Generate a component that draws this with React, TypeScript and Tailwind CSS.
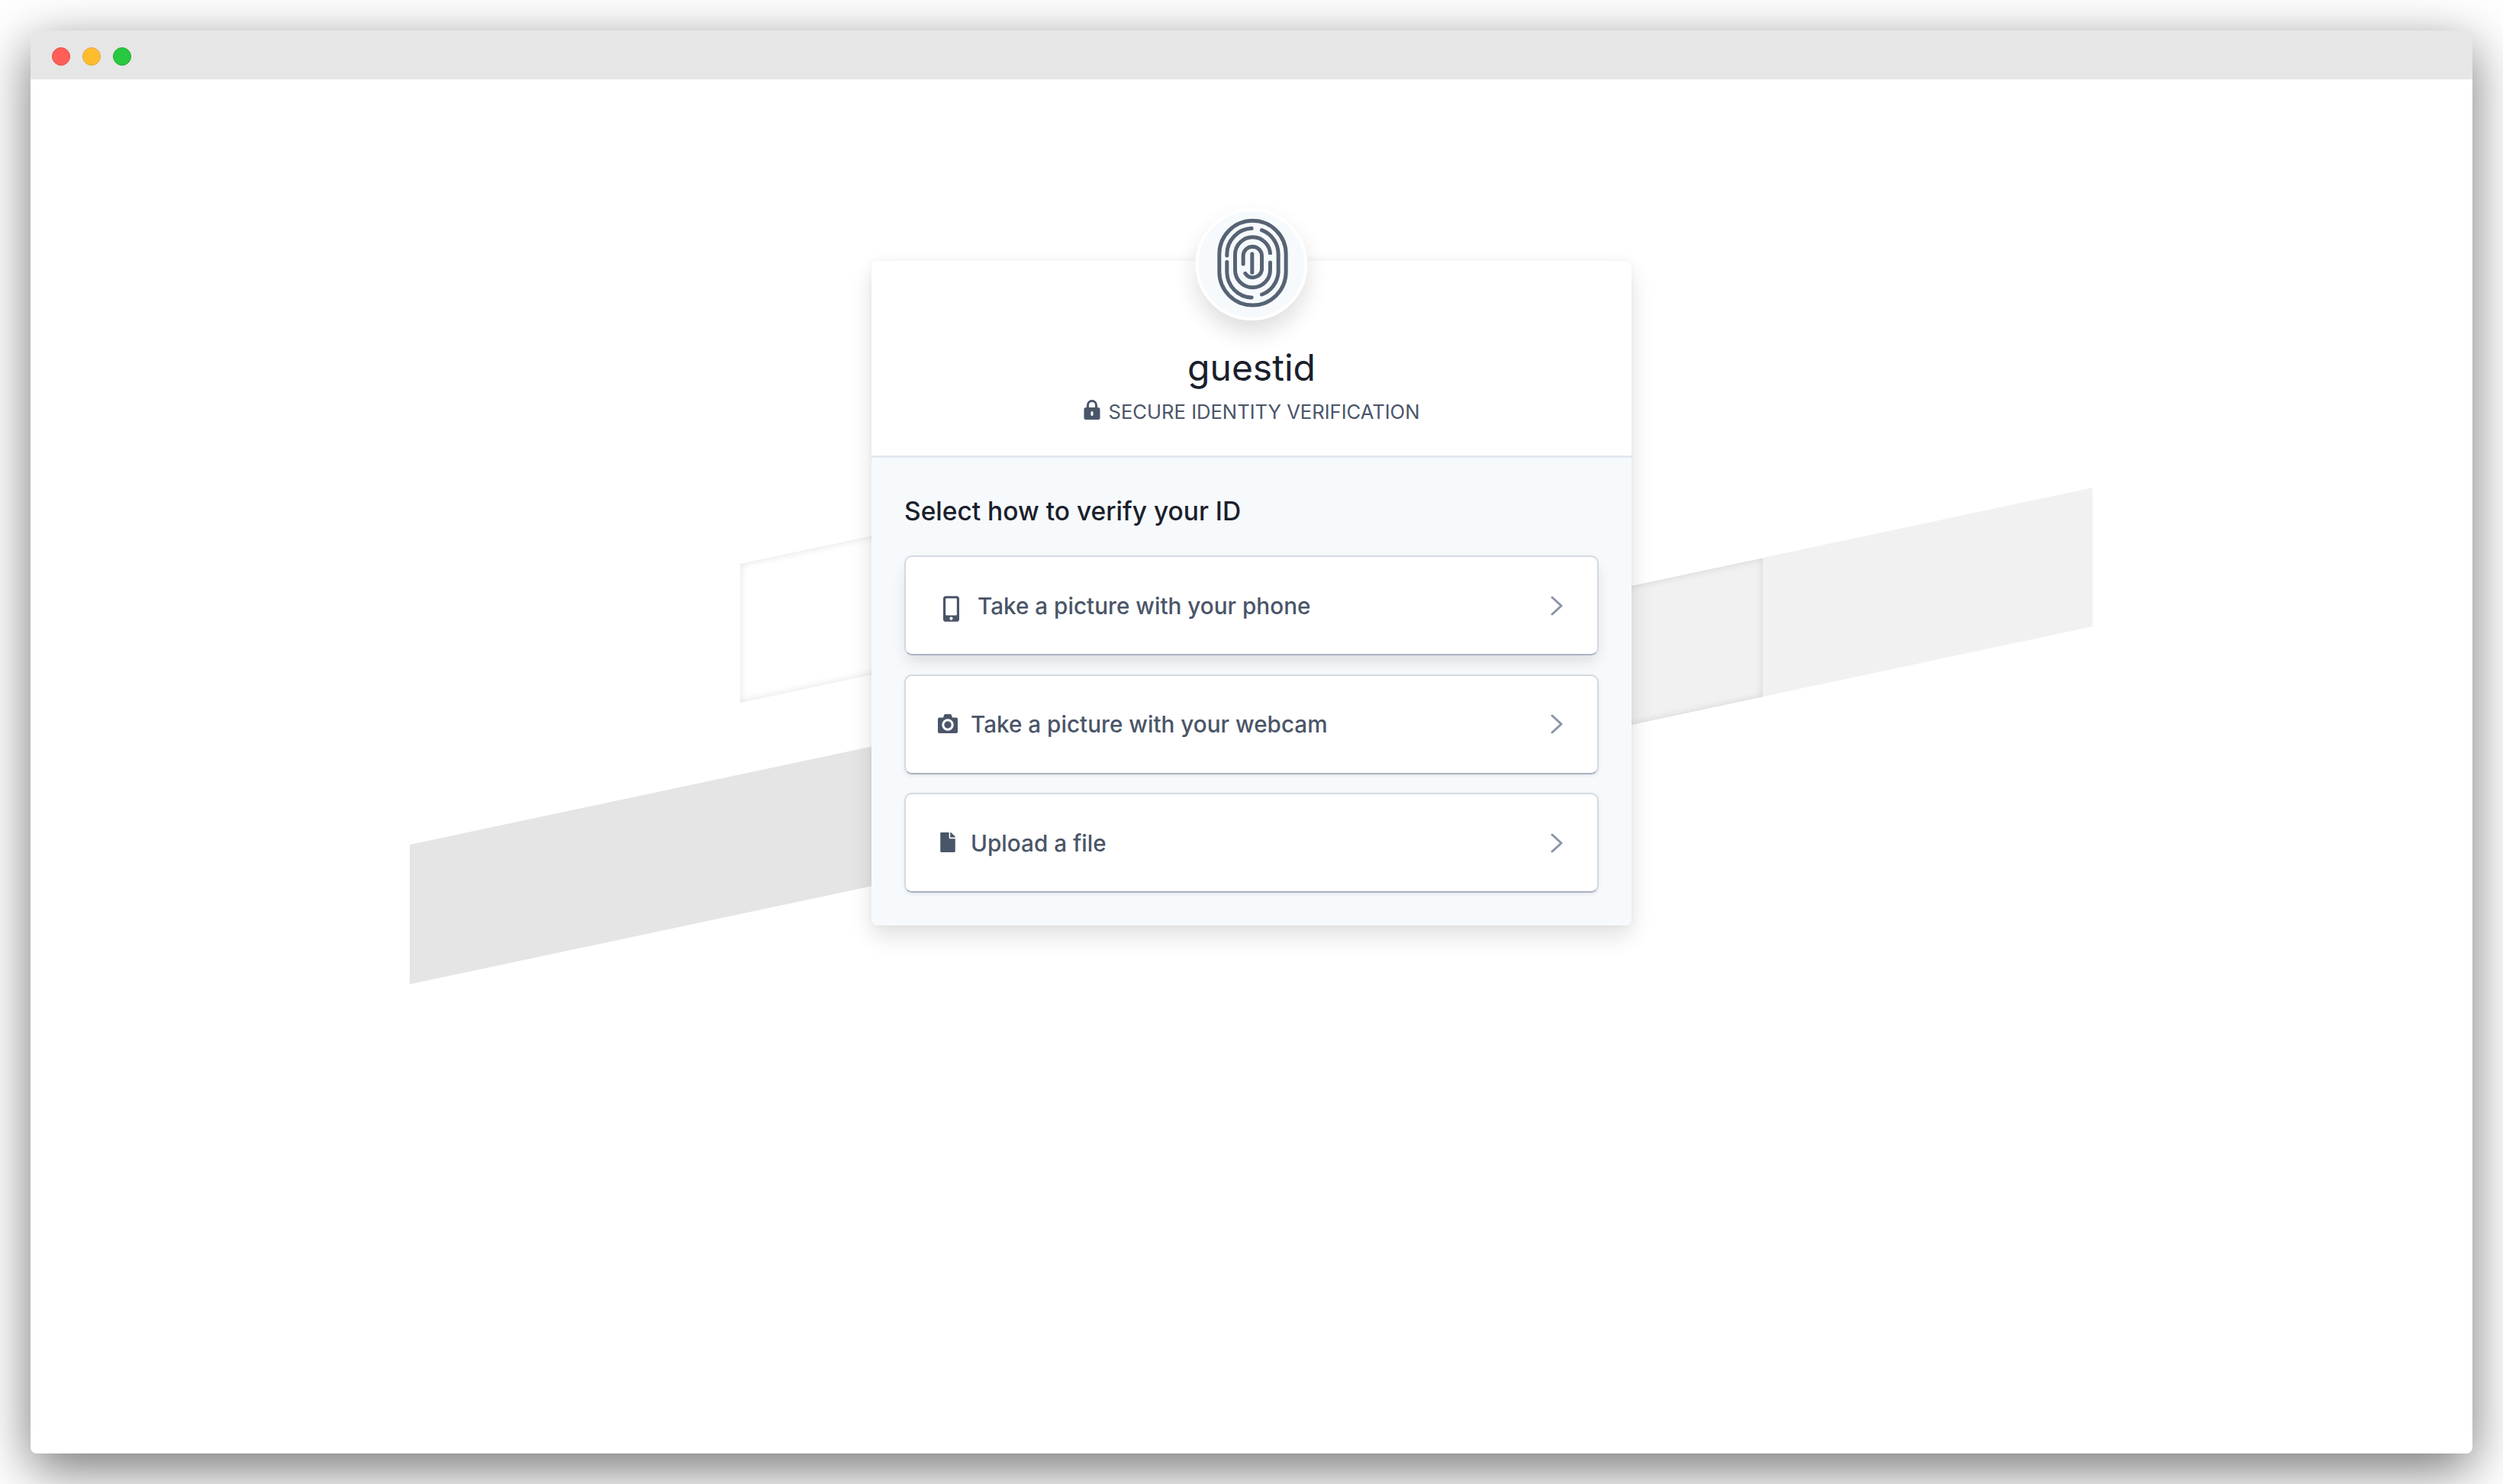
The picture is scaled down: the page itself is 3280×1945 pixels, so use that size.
import React from "react";
import { FaMobileAlt, FaFile } from "react-icons/fa";

function Fingerprint() {
  return (
    <svg viewBox="0 0 600 510" className="-ml-[3px] -mt-[4px] h-[170px] w-[200px] shrink-0 blur-[0.5px]" fill="none" stroke="#566374" strokeWidth="15" strokeLinecap="round">
      <rect x="178" y="88" width="262" height="332" rx="131" ry="131" />
      <path d="M208 225V219A101 101 0 0 1 305 118" />
      <path d="M345 125A101 101 0 0 1 410 219V291A101 101 0 0 1 345 378" />
      <path d="M208 250V291A101 101 0 0 0 305 390" />
      <path d="M378 215V221A69 69 0 0 0 240 221V281A69 69 0 0 0 378 281V252" />
      <path d="M272 258V226A36 36 0 0 1 345 226V282A36 36 0 0 1 280 295" />
      <path d="M307 218V292" />
    </svg>
  );
}

function Lock() {
  return (
    <svg viewBox="0 0 22 26" className="mb-[6px] h-[26px] w-[22px] shrink-0">
      <path d="M5.5 12V7a5.5 5.5 0 0 1 11 0v5" fill="none" stroke="#4a5568" strokeWidth="3" />
      <rect x="0.5" y="10" width="21" height="16" rx="2.5" fill="#4a5568" />
      <rect x="9.5" y="15" width="3" height="6" rx="1.5" fill="#ffffff" />
    </svg>
  );
}

function Camera() {
  return (
    <svg viewBox="0 0 26 25" className="h-[25px] w-[26px] shrink-0">
      <path d="M2 4.5H7L8.2 1.2A1.8 1.8 0 0 1 9.9 0H16.1A1.8 1.8 0 0 1 17.8 1.2L19 4.5H24A2 2 0 0 1 26 6.5V23A2 2 0 0 1 24 25H2A2 2 0 0 1 0 23V6.5A2 2 0 0 1 2 4.5Z" fill="#4a5568" />
      <circle cx="13" cy="14" r="6.2" fill="none" stroke="#ffffff" strokeWidth="3" />
    </svg>
  );
}

function Chevron() {
  return (
    <svg viewBox="0 0 18 26" className="h-[26px] w-[18px] shrink-0" fill="none" stroke="#8a94a6" strokeWidth="3" strokeLinecap="round" strokeLinejoin="round">
      <path d="M3 2L15 13L3 24" />
    </svg>
  );
}

function Option({ icon, label, gap, pad, first }: { icon: React.ReactNode; label: string; gap: string; pad: string; first?: boolean }) {
  return (
    <button
      className={
        "flex h-[131px] w-full items-center justify-between rounded-[10px] border-2 border-[#d3d9e2] border-b-[#a9b2c0] bg-white pr-[44px] " +
        pad + " " +
        (first ? "shadow-[0_10px_20px_-3px_rgba(0,0,0,0.12)]" : "shadow-[0_2px_5px_rgba(0,0,0,0.08)]")
      }
    >
      <span className={"flex items-center " + gap}>
        {icon}
        <span className="pt-[2px] text-[29.7px] font-medium leading-none text-[#4a5568]">{label}</span>
      </span>
      <Chevron />
    </button>
  );
}

export default function App() {
  return (
    <div className="h-[1945px] w-[3280px] overflow-hidden bg-white p-10 [font-family:Inter,sans-serif]">
      <div className="flex h-[1865px] w-[3200px] flex-col overflow-hidden rounded-[8px] bg-white shadow-[0_20px_68px_rgba(0,0,0,0.55)]">
        <div className="flex h-16 shrink-0 items-center gap-4 bg-[#e6e6e6] pl-[28px] pt-1">
          <span className="h-6 w-6 rounded-full border border-[#e24b45] bg-[#ff5f57]" />
          <span className="h-6 w-6 rounded-full border border-[#e1a73e] bg-[#ffbd2e]" />
          <span className="h-6 w-6 rounded-full border border-[#1aab29] bg-[#28c840]" />
        </div>
        <div className="relative flex-1 pt-[238px]">
          <div className="absolute left-[497px] top-[1003px] h-[183px] w-[800px] origin-top-left -skew-y-12 bg-[#e5e5e5]" />
          <div className="absolute left-[930px] top-[635px] h-[182px] w-[300px] origin-top-left -skew-y-12 bg-white shadow-[inset_0_0_10px_rgba(0,0,0,0.12)]" />
          <div className="absolute left-[2270px] top-[627px] h-[182px] w-[432px] origin-top-left -skew-y-12 bg-[#f1f1f1]" />
          <div className="absolute left-[2060px] top-[672px] h-[182px] w-[210px] origin-top-left -skew-y-12 bg-[#f1f1f1] shadow-[inset_0_0_10px_rgba(0,0,0,0.12)]" />

          <div className="relative mx-auto w-[996px] rounded-[8px] shadow-[0_14px_30px_rgba(0,0,0,0.12),0_0_8px_rgba(0,0,0,0.05)]">
            <div className="absolute left-1/2 top-[-69px] flex h-[147px] w-[147px] -translate-x-1/2 items-center justify-center rounded-full border-4 border-white bg-[#f7fafc] shadow-[0_16px_30px_rgba(0,0,0,0.13)]">
              <Fingerprint />
            </div>
            <div className="flex h-[258px] flex-col items-center rounded-t-[8px] border-b-[3px] border-[#e2e8f0] bg-white pt-[108px]">
              <h1 className="text-[48px] font-normal leading-[64px] text-[#1a202c]">guestid</h1>
              <div className="mt-[10px] flex items-center gap-[11px]">
                <Lock />
                <span className="text-[25.6px] leading-[32px] text-[#4a5568]">SECURE IDENTITY VERIFICATION</span>
              </div>
            </div>
            <div className="rounded-b-[8px] bg-[#f7fafc] px-[43px] pb-[43px] pt-[46px]">
              <h2 className="mb-[34px] text-[33.5px] font-medium leading-[48px] text-[#1a202c]">Select how to verify your ID</h2>
              <div className="flex flex-col gap-[24.5px]">
                <Option first label="Take a picture with your phone" pad="pl-[49px]" gap="gap-[24px]" icon={<FaMobileAlt className="mt-[9px] h-[34px] w-[21px] text-[#4a5568]" />} />
                <Option label="Take a picture with your webcam" pad="pl-[42px]" gap="gap-[17px]" icon={<Camera />} />
                <Option label="Upload a file" pad="pl-[45px]" gap="gap-[20px]" icon={<FaFile className="h-[26px] w-[20px] text-[#4a5568]" />} />
              </div>
            </div>
          </div>
        </div>
      </div>
    </div>
  );
}
